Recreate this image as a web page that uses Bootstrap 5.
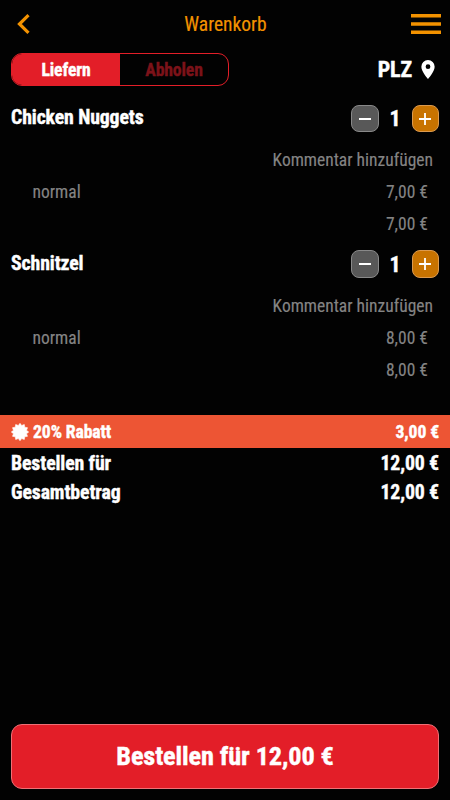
<!DOCTYPE html>
<html lang="de">
<head>
<meta charset="utf-8">
<meta name="viewport" content="width=device-width, initial-scale=1">
<title>Warenkorb</title>
<link href="https://cdn.jsdelivr.net/npm/bootstrap@5.3.0/dist/css/bootstrap.min.css" rel="stylesheet">
<style>
body{font-family:"Roboto Condensed",Roboto,sans-serif;font-stretch:75%;background:#020202;color:#fff;line-height:1;font-size:17.5px}
.fw-bold{-webkit-text-stroke:.4px currentColor;letter-spacing:-.12px}
.screen{height:800px;overflow:hidden}
.top{height:48px;padding:0 9px 0 16px;color:#f39200}
.top-title{font-size:19.5px;padding:2px 0 0 9px;-webkit-text-stroke:.15px currentColor}
.mode{height:48px;padding:5px 15px 10px 11px}
.toggle{width:218px;height:33px;border:1.5px solid #e31e28;border-radius:11px;overflow:hidden}
.toggle .btn{border:0;border-radius:0;padding:2px 0 0;font-size:17.7px;line-height:1;color:#7c1219}
.toggle .btn.active{background:#e31e28;color:#fff}
.plz{font-size:22px;gap:9px}
.item{height:145.7px}
.item-head{height:48px;padding:8.8px 11px 0}
.item-name{font-size:19.8px;padding-top:3.2px}
.step{width:27.5px;height:27.5px;padding:0;border:1px solid #898989;border-radius:8px;background:#585858}
.step-add{border-color:#dc9a4e;background:#c87300}
.qty{width:33px;font-size:22px;padding-top:1px}
.line{height:31.8px;color:#848484;padding:3px 22px 0 32.500px;-webkit-text-stroke:.15px currentColor}
.line-note{padding:1.5px 17px 0 0}
.promo{height:33px;margin-top:28px;background:#ed5534;padding:0 11px;font-size:17.7px}
.promo-text{padding-top:2px}
.sum{height:29.5px;font-size:19.8px;padding:1px 11px 0}
.order{height:65px;margin:0 11px 11px;padding:0;border:1px solid #ef7076;border-radius:11px;background:#e31e28;font-size:26.3px;color:#fff}
</style>
</head>
<body>
<div class="screen d-flex flex-column">
  <header class="top d-flex align-items-center justify-content-between">
    <svg width="15" height="20" viewBox="0 0 15 20"><path d="M12.5 1.2 3.5 10l9 8.8" fill="none" stroke="#f39200" stroke-width="3.2"/></svg>
    <span class="top-title">Warenkorb</span>
    <svg width="30" height="20" viewBox="0 0 30 20"><path d="M0 0h30v3.6H0zM0 8.200h30v3.600H0zM0 16.400h30V20H0z" fill="#f39200"/></svg>
  </header>
  <div class="mode d-flex align-items-center justify-content-between">
    <div class="toggle d-flex">
      <button class="btn active fw-bold w-50">Liefern</button>
      <button class="btn fw-bold w-50">Abholen</button>
    </div>
    <div class="plz d-flex align-items-center fw-bold"><span>PLZ</span>
      <svg width="14" height="19" viewBox="0 0 14 20"><path fill="#fff" stroke="none" fill-rule="evenodd" d="M7 0a7 7 0 0 0-7 7c0 5.200 7 13 7 13s7-7.800 7-13a7 7 0 0 0-7-7zm0 4.500a2.500 2.500 0 1 1 0 5 2.500 2.500 0 0 1 0-5z"/></svg>
    </div>
  </div>

  <section class="item">
    <div class="item-head d-flex justify-content-between align-items-start">
      <span class="item-name fw-bold">Chicken Nuggets</span>
      <div class="d-flex align-items-center">
        <button class="step d-flex align-items-center justify-content-center"><svg width="12" height="12"><path d="M0 6h12" stroke="#fff" stroke-width="2"/></svg></button>
        <span class="qty text-center fw-bold">1</span>
        <button class="step step-add d-flex align-items-center justify-content-center"><svg width="12" height="12"><path d="M0 6h12M6 0v12" stroke="#fff" stroke-width="1.800"/></svg></button>
      </div>
    </div>
    <div class="line line-note d-flex align-items-center justify-content-end"><span>Kommentar hinzufügen</span></div>
    <div class="line d-flex align-items-center justify-content-between"><span>normal</span><span>7,00 €</span></div>
    <div class="line d-flex align-items-center justify-content-end"><span>7,00 €</span></div>
  </section>

  <section class="item">
    <div class="item-head d-flex justify-content-between align-items-start">
      <span class="item-name fw-bold">Schnitzel</span>
      <div class="d-flex align-items-center">
        <button class="step d-flex align-items-center justify-content-center"><svg width="12" height="12"><path d="M0 6h12" stroke="#fff" stroke-width="2"/></svg></button>
        <span class="qty text-center fw-bold">1</span>
        <button class="step step-add d-flex align-items-center justify-content-center"><svg width="12" height="12"><path d="M0 6h12M6 0v12" stroke="#fff" stroke-width="1.800"/></svg></button>
      </div>
    </div>
    <div class="line line-note d-flex align-items-center justify-content-end"><span>Kommentar hinzufügen</span></div>
    <div class="line d-flex align-items-center justify-content-between"><span>normal</span><span>8,00 €</span></div>
    <div class="line d-flex align-items-center justify-content-end"><span>8,00 €</span></div>
  </section>

  <div class="promo d-flex align-items-center justify-content-between fw-bold">
    <span class="d-flex align-items-center">
      <svg class="me-1" width="18" height="18" viewBox="-9 -9 18 18"><path fill="#fff" d="M0-8.700 1.700-6.500 4.300-7.500 4.700-4.800 7.500-4.300 6.500-1.700 8.700 0 6.500 1.700 7.500 4.300 4.700 4.800 4.300 7.500 1.700 6.500 0 8.700-1.700 6.500-4.300 7.500-4.700 4.800-7.500 4.300-6.500 1.700-8.700 0-6.500-1.700-7.500-4.300-4.700-4.800-4.300-7.500-1.700-6.500z" stroke="#fff" stroke-width=".6" stroke-linejoin="round"/></svg>
      <span class="promo-text">20% Rabatt</span>
    </span>
    <span class="promo-text">3,00 €</span>
  </div>
  <div class="sum d-flex align-items-center justify-content-between fw-bold"><span>Bestellen für</span><span>12,00 €</span></div>
  <div class="sum d-flex align-items-center justify-content-between fw-bold"><span>Gesamtbetrag</span><span>12,00 €</span></div>
  <button class="order btn fw-bold mt-auto">Bestellen für 12,00 €</button>
</div>
<script src="https://cdn.jsdelivr.net/npm/bootstrap@5.3.0/dist/js/bootstrap.bundle.min.js"></script>
</body>
</html>
